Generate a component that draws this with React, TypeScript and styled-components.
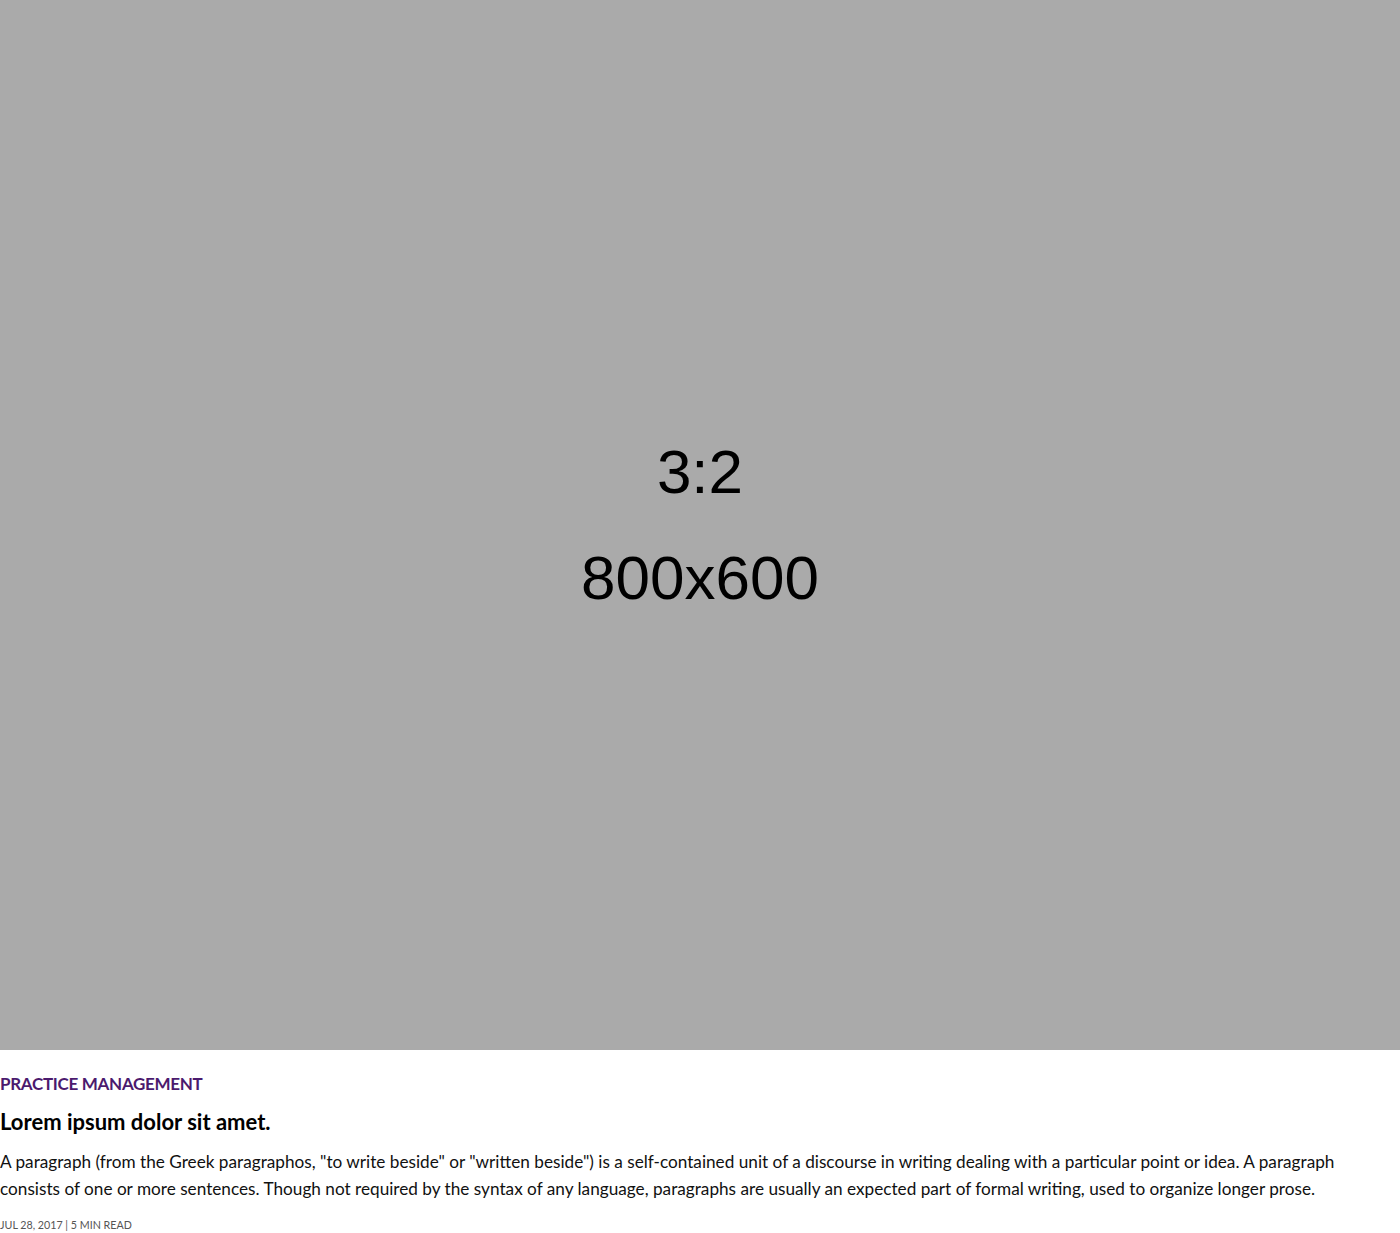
import styled, { createGlobalStyle } from "styled-components";

const GlobalStyle = createGlobalStyle`
  html, body {
    margin: 0;
    padding: 0;
    background: #ffffff;
  }
  body {
    font-family: "Lato", "Open Sans", sans-serif;
    color: #000000;
  }
`;

const Card = styled.article`
  display: flex;
  flex-direction: column;
  width: 1400px;
`;

const Placeholder = styled.div`
  display: flex;
  flex-direction: column;
  align-items: center;
  justify-content: center;
  gap: 44px;
  width: 100%;
  height: 1050px;
  background: #aaaaaa;
  font-family: "Liberation Sans", Arial, sans-serif;
  color: #000000;
`;

const PlaceholderText = styled.span`
  font-size: 62px;
  line-height: 62px;
`;

const Body = styled.div`
  display: flex;
  flex-direction: column;
  padding: 23px 14px 0 0;
`;

const Category = styled.div`
  font-size: 17px;
  font-weight: 700;
  letter-spacing: -0.3px;
  color: #4b1a6e;
  text-transform: uppercase;
  line-height: 22px;
`;

const Title = styled.h2`
  margin: 13px 0 0;
  font-size: 22px;
  font-weight: 700;
  line-height: 28px;
`;

const Text = styled.p`
  margin: 12px 0 0;
  font-size: 17.2px;
  line-height: 27px;
  color: #111111;
`;

const Meta = styled.div`
  margin-top: 16px;
  font-size: 10.7px;
  line-height: 14px;
  color: #555555;
  text-transform: uppercase;
`;

export default function App() {
  return (
    <>
      <GlobalStyle />
      <Card>
        <Placeholder>
          <PlaceholderText>3:2</PlaceholderText>
          <PlaceholderText>800x600</PlaceholderText>
        </Placeholder>
        <Body>
          <Category>Practice Management</Category>
          <Title>Lorem ipsum dolor sit amet.</Title>
          <Text>
            A paragraph (from the Greek paragraphos, "to write beside" or "written beside") is a
            self-contained unit of a discourse in writing dealing with a particular point or idea. A
            paragraph consists of one or more sentences. Though not required by the syntax of any
            language, paragraphs are usually an expected part of formal writing, used to organize
            longer prose.
          </Text>
          <Meta>Jul 28, 2017 | 5 min read</Meta>
        </Body>
      </Card>
    </>
  );
}
